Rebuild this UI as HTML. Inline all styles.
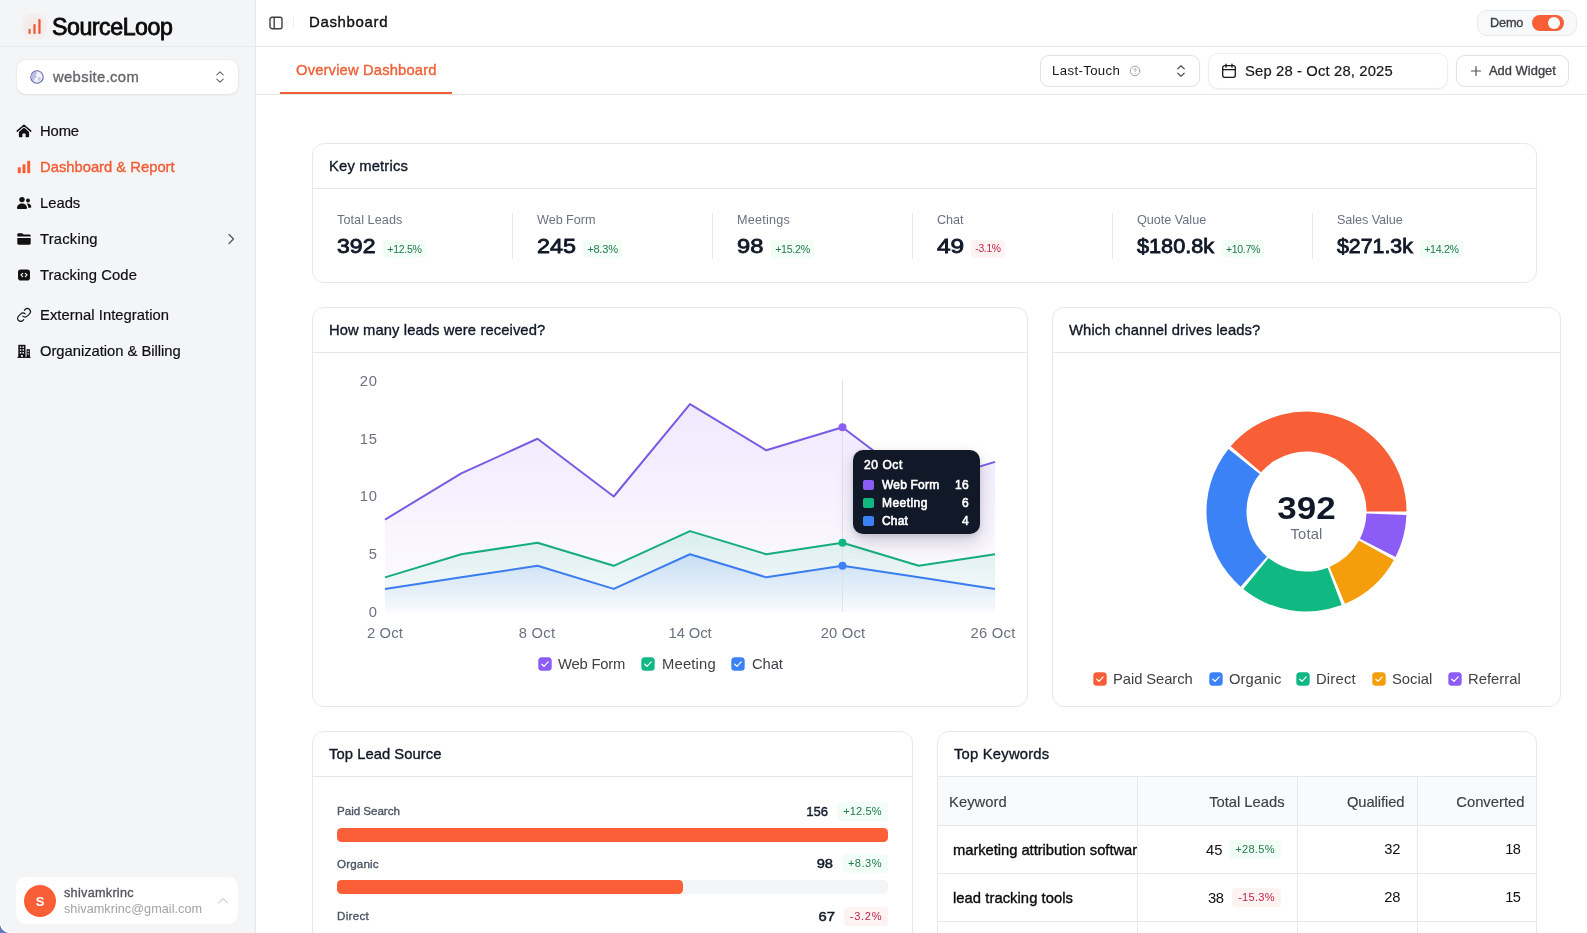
<!DOCTYPE html>
<html lang="en">
<head>
<meta charset="utf-8">
<title>SourceLoop Dashboard</title>
<style>
*{box-sizing:border-box;margin:0;padding:0}
html,body{width:1587px;height:933px;overflow:hidden;background:#fff}
body{font-family:"Liberation Sans",Arial,sans-serif;color:#111827;position:relative;font-size:14px}
.abs{position:absolute}
.t{will-change:transform;position:absolute;white-space:nowrap;line-height:20px;margin-top:-10px;height:20px}
.r{text-align:right}
.m{-webkit-text-stroke:0.35px currentColor}
.sb{-webkit-text-stroke:0.6px currentColor}
.sb3{-webkit-text-stroke:.45px currentColor}
.m2{-webkit-text-stroke:0.15px currentColor}
.b{font-weight:700}
.sb2{-webkit-text-stroke:.85px currentColor}
.card{position:absolute;border:1px solid #e7e8ea;border-radius:12px;background:#fff}
.hl{position:absolute;height:1px;background:#e7e8ea}
.vl{position:absolute;width:1px;background:#e7e8ea}
.g{color:#6b7280}
.badge{will-change:transform;position:absolute;height:18px;border-radius:4px;font-size:10.5px;line-height:18px;text-align:center;white-space:nowrap}
.up{background:#f3fdf7;color:#1f7a4d}
.dn{background:#fef3f3;color:#c0264a}
svg{position:absolute;overflow:visible}
/*FIT*/
#t-logo{font-size:23.21px!important;letter-spacing:-0.482px}
#t-site{font-size:14.77px!important;letter-spacing:0.369px}
#t-home{font-size:14.77px!important;letter-spacing:-0.111px}
#t-dash{font-size:14.77px!important;letter-spacing:0.001px}
#t-leads{font-size:14.77px!important;letter-spacing:0.006px}
#t-track{font-size:14.77px!important;letter-spacing:0.212px}
#t-tcode{font-size:14.77px!important;letter-spacing:0.114px}
#t-ext{font-size:14.77px!important;letter-spacing:0.052px}
#t-org{font-size:14.77px!important;letter-spacing:-0.026px}
#t-uname{font-size:12.66px!important;letter-spacing:0.280px}
#t-umail{font-size:12.66px!important;letter-spacing:0.038px}
#t-title{font-size:14.98px!important;letter-spacing:0.657px}
#t-tab{font-size:14.77px!important;letter-spacing:0.150px}
#t-demo{font-size:12.66px!important;letter-spacing:-0.145px}
#t-lt{font-size:13.19px!important;letter-spacing:0.373px}
#t-date{font-size:14.77px!important;letter-spacing:0.158px}
#t-add{font-size:12.87px!important;letter-spacing:0.041px}
#t-km{font-size:14.77px!important;letter-spacing:0.173px}
#t-k1l{font-size:12.66px!important;letter-spacing:0.057px}
#t-k1v{font-size:21.10px!important;letter-spacing:0.000px;transform:scaleX(1.093);transform-origin:left center}
#t-k2l{font-size:12.66px!important;letter-spacing:-0.047px}
#t-k2v{font-size:21.10px!important;letter-spacing:0.000px;transform:scaleX(1.105);transform-origin:left center}
#t-k3l{font-size:12.66px!important;letter-spacing:0.208px}
#t-k3v{font-size:21.10px!important;letter-spacing:0.000px;transform:scaleX(1.125);transform-origin:left center}
#t-k4l{font-size:12.66px!important;letter-spacing:-0.038px}
#t-k4v{font-size:21.10px!important;letter-spacing:0.000px;transform:scaleX(1.159);transform-origin:left center}
#t-k5l{font-size:12.66px!important;letter-spacing:-0.021px}
#t-k5v{font-size:21.10px!important;letter-spacing:0.000px;transform:scaleX(1.028);transform-origin:left center}
#t-k6l{font-size:12.66px!important;letter-spacing:-0.079px}
#t-k6v{font-size:21.10px!important;letter-spacing:0.000px;transform:scaleX(1.011);transform-origin:left center}
#b-k1{font-size:10.59px!important;letter-spacing:-0.315px}
#b-k2{font-size:11.08px!important;letter-spacing:-0.199px}
#b-k3{font-size:10.71px!important;letter-spacing:-0.315px}
#b-k4{font-size:10.37px!important;letter-spacing:-0.315px}
#b-k5{font-size:10.56px!important;letter-spacing:-0.315px}
#b-k6{font-size:10.68px!important;letter-spacing:-0.315px}
#t-lc{font-size:14.77px!important;letter-spacing:0.101px}
#t-dc{font-size:14.77px!important;letter-spacing:0.129px}
#t-y20{font-size:14.77px!important;letter-spacing:0.945px;margin-left:0.945px}
#t-x1{font-size:14.77px!important;letter-spacing:0.193px}
#t-x2{font-size:14.77px!important;letter-spacing:0.243px}
#t-x3{font-size:14.77px!important;letter-spacing:-0.088px}
#t-x4{font-size:14.77px!important;letter-spacing:0.172px}
#t-x5{font-size:14.77px!important;letter-spacing:0.252px}
#t-l1{font-size:14.77px!important;letter-spacing:-0.199px}
#t-l2{font-size:14.77px!important;letter-spacing:0.188px}
#t-l3{font-size:14.77px!important;letter-spacing:-0.108px}
#t-tt{font-size:12.00px!important;letter-spacing:0.576px}
#t-tt1{font-size:12.00px!important;letter-spacing:0.192px}
#t-tt2{font-size:12.00px!important;letter-spacing:0.456px}
#t-tt3{font-size:12.00px!important;letter-spacing:0.160px}
#t-tv1{font-size:12.00px!important;letter-spacing:0.281px;margin-left:0.281px}
#t-d1{font-size:14.77px!important;letter-spacing:-0.070px}
#t-d2{font-size:14.77px!important;letter-spacing:0.109px}
#t-d3{font-size:14.77px!important;letter-spacing:0.201px}
#t-d4{font-size:14.77px!important;letter-spacing:-0.012px}
#t-d5{font-size:14.77px!important;letter-spacing:0.035px}
#t-dtot{font-size:30.59px!important;letter-spacing:0.000px;transform:scaleX(1.143);transform-origin:center center}
#t-dlab{font-size:14.77px!important;letter-spacing:0.194px}
#t-sc{font-size:14.77px!important;letter-spacing:0.057px}
#t-s1{font-size:11.60px!important;letter-spacing:-0.026px}
#t-s2{font-size:11.60px!important;letter-spacing:0.170px}
#t-s3{font-size:11.60px!important;letter-spacing:0.291px}
#t-s1v{font-size:12.98px!important;letter-spacing:0.000px;transform:scaleX(0.995);transform-origin:right center}
#t-s2v{font-size:12.98px!important;letter-spacing:0.000px;transform:scaleX(1.133);transform-origin:right center}
#t-s3v{font-size:12.98px!important;letter-spacing:0.000px;transform:scaleX(1.147);transform-origin:right center}
#b-s1{font-size:11.08px!important;letter-spacing:0.131px}
#b-s2{font-size:11.08px!important;letter-spacing:0.501px}
#b-s3{font-size:11.08px!important;letter-spacing:0.697px}
#t-kc{font-size:14.77px!important;letter-spacing:0.219px}
#t-h1{font-size:14.77px!important;letter-spacing:0.053px}
#t-h2{font-size:14.77px!important;letter-spacing:-0.017px;margin-left:-0.017px}
#t-h3{font-size:14.77px!important;letter-spacing:-0.078px;margin-left:-0.078px}
#t-h4{font-size:14.77px!important;letter-spacing:0.017px;margin-left:0.017px}
#t-r2k{font-size:14.77px!important;letter-spacing:0.052px}
#t-r1a{font-size:14.77px!important;letter-spacing:0.145px}
#t-r1b{font-size:14.77px!important;letter-spacing:-0.355px;margin-left:-0.355px}
#t-r1c{font-size:14.56px!important;letter-spacing:-0.420px;margin-left:-0.420px}
#t-r2a{font-size:14.77px!important;letter-spacing:-0.355px}
#t-r2b{font-size:14.77px!important;letter-spacing:-0.355px;margin-left:-0.355px}
#t-r2c{font-size:14.56px!important;letter-spacing:-0.420px;margin-left:-0.420px}
#b-r1{font-size:11.08px!important;letter-spacing:0.311px}
#b-r2{font-size:11.08px!important;letter-spacing:0.265px}
#t-y15{font-size:14.77px!important;letter-spacing:0.945px;margin-left:0.945px}
#t-y10{font-size:14.77px!important;letter-spacing:0.945px;margin-left:0.945px}
#t-r1k{font-size:14.77px!important;letter-spacing:-0.048px}
#t-y5{font-size:14.77px!important;letter-spacing:0.945px;margin-left:0.945px}
#t-y0{font-size:14.77px!important;letter-spacing:0.945px;margin-left:0.945px}
#t-tv2{font-size:12.00px!important;letter-spacing:0.281px;margin-left:0.281px}
#t-tv3{font-size:12.00px!important;letter-spacing:0.281px;margin-left:0.281px}
/*ENDFIT*/
</style>
</head>
<body>

<!-- ============ SIDEBAR ============ -->
<div class="abs" id="sidebar" style="left:0;top:0;width:256px;height:933px;background:#f4f5f7;border-right:1px solid #e5e7eb"></div>
<div class="hl" style="left:0;top:46px;width:255px"></div>

<!-- logo -->
<svg style="left:22px;top:13px" width="25" height="27" viewBox="0 0 25 27">
  <defs><radialGradient id="lg" cx=".5" cy=".5" r=".62"><stop offset="0" stop-color="#ff6a3d" stop-opacity=".09"/><stop offset=".7" stop-color="#ff6a3d" stop-opacity=".05"/><stop offset="1" stop-color="#ff6a3d" stop-opacity="0"/></radialGradient></defs>
  <rect x="0" y="0" width="25" height="27" rx="6" fill="url(#lg)"/>
  <rect x="6.500" y="15.800" width="2.100" height="5.200" rx=".9" fill="#ea5a33"/>
  <rect x="11.400" y="11" width="2.200" height="10" rx=".9" fill="#ea5a33"/>
  <rect x="16.300" y="6" width="2.300" height="15" rx=".9" fill="#ea5a33"/>
</svg>
<div class="t" id="t-logo" style="-webkit-text-stroke:.8px #0a0a0a;left:52px;top:27px;font-size:22px;line-height:28px;margin-top:-14px;height:28px;color:#0a0a0a">SourceLoop</div>

<!-- site selector -->
<div class="abs" style="left:17px;top:60px;width:221px;height:34px;background:#fff;border-radius:9px;box-shadow:0 0 0 1px rgba(229,231,235,.35),0 1px 3px rgba(0,0,0,.09)"></div>
<svg style="left:30px;top:70px" width="14" height="14" viewBox="0 0 14 14">
  <circle cx="7" cy="7" r="6.200" fill="#f1f2fc" stroke="#6164ad" stroke-width="1.100"/>
  <path d="M2.300 3.600c1.300-1.500 3.400-1.900 4.300-1.300.9.600-.3 1.500-.8 2.300-.5.800.9 1.100.7 2.100-.2 1-1.600.8-2 1.800-.3.800.3 1.900-.5 2.300C2.500 10 1.200 8.300 1.200 7c0-1.300.4-2.500 1.100-3.400z" fill="#b9bce3"/>
  <path d="M8.500 7.300c.9-.5 2-.1 2.300.7.300.8-.3 1.800-1 2.600-.6.700-1.500.5-1.600-.4-.1-.9-.7-2.300.3-2.900z" fill="#c9cbea"/>
  <path d="M9.300 1.600c.3.800 1.300 1.100 2.100 1.600" fill="none" stroke="#b9bce3" stroke-width=".9"/>
</svg>
<div class="t m" id="t-site" style="left:53px;top:77px;font-size:14px;color:#65676c">website.com</div>
<svg style="left:214px;top:70px" width="12" height="14" viewBox="0 0 12 14" fill="none" stroke="#63636b" stroke-width="1.100" stroke-linecap="round" stroke-linejoin="round">
  <path d="M2.8 4.8 6 1.8l3.2 3M2.8 9.2 6 12.2l3.2-3"/>
</svg>

<!-- nav -->
<svg style="left:16px;top:123px" width="16" height="16" viewBox="0 0 16 16">
  <path d="M8 2.2 1.2 8.1M8 2.2l6.8 5.9" fill="none" stroke="#111" stroke-width="1.5" stroke-linecap="round"/>
  <path d="M8 4.6 2.9 9v4.3c0 .5.4.9.9.9h2.6v-3.3c0-.3.2-.5.5-.5h2.2c.3 0 .5.2.5.5v3.3h2.6c.5 0 .9-.4.9-.9V9z" fill="#111"/>
</svg>
<div class="t" id="t-home" style="left:40px;top:131px;font-size:14px;color:#0f0f10;-webkit-text-stroke:.2px #0f0f10">Home</div>

<svg style="left:16px;top:159px" width="16" height="16" viewBox="0 0 16 16" fill="#f95f37">
  <rect x="1.8" y="8.3" width="3" height="6" rx=".8"/><rect x="6.5" y="5.2" width="3" height="9.1" rx=".8"/><rect x="11.2" y="1.8" width="3" height="12.5" rx=".8"/>
</svg>
<div class="t m" id="t-dash" style="left:40px;top:167px;font-size:14px;color:#f05c33">Dashboard &amp; Report</div>

<svg style="left:16px;top:195px" width="16" height="16" viewBox="0 0 16 16" fill="#111">
  <circle cx="6" cy="4.6" r="2.7"/><path d="M1 13.2c0-2.8 2.2-4.6 5-4.6s5 1.8 5 4.6c0 .5-.4.8-.8.8H1.800c-.4 0-.8-.3-.8-.8z"/>
  <circle cx="12" cy="5.6" r="2"/><path d="M11.4 8.500c2.200-.2 3.900 1.300 3.900 3.500 0 .4-.3.700-.7.700h-2.400c.1-1.700-.4-3.100-1.600-4z"/>
</svg>
<div class="t" id="t-leads" style="left:40px;top:203px;font-size:14px;color:#0f0f10;-webkit-text-stroke:.2px #0f0f10">Leads</div>

<svg style="left:16px;top:231px" width="16" height="16" viewBox="0 0 16 16" fill="#111">
  <path d="M1.300 3.600c0-.8.600-1.400 1.400-1.400h3.100c.4 0 .8.200 1.100.5l.7.800h5.700c.8 0 1.400.6 1.400 1.400v.5H1.300z"/>
  <path d="M1.300 7h13.400v5.300c0 .8-.6 1.400-1.400 1.400H2.700c-.8 0-1.400-.6-1.400-1.400z"/>
</svg>
<div class="t" id="t-track" style="left:40px;top:239px;font-size:14px;color:#0f0f10;-webkit-text-stroke:.2px #0f0f10">Tracking</div>
<svg style="left:226px;top:233px" width="10" height="12" viewBox="0 0 10 12" fill="none" stroke="#52525b" stroke-width="1.2" stroke-linecap="round" stroke-linejoin="round"><path d="M3 1.500 7.500 6 3 10.500"/></svg>

<svg style="left:16px;top:267px" width="16" height="16" viewBox="0 0 16 16">
  <rect x="2" y="2.400" width="12" height="11.200" rx="2.800" fill="#111"/>
  <path d="M6.700 6.300 5 8l1.700 1.700M9.300 6.300 11 8 9.300 9.700" fill="none" stroke="#f4f5f7" stroke-width="1.200" stroke-linecap="round" stroke-linejoin="round"/>
</svg>
<div class="t" id="t-tcode" style="left:40px;top:275px;font-size:14px;color:#0f0f10;-webkit-text-stroke:.2px #0f0f10">Tracking Code</div>

<svg style="left:16px;top:307px" width="16" height="16" viewBox="0 0 16 16" fill="none" stroke="#111" stroke-width="1.100" stroke-linecap="round" stroke-linejoin="round">
  <path d="M6.800 9.200a3.100 3.100 0 0 0 4.400 0l2.300-2.300a3.100 3.100 0 0 0-4.400-4.400L8.300 3.300"/>
  <path d="M9.200 6.800a3.100 3.100 0 0 0-4.400 0L2.500 9.100a3.100 3.100 0 0 0 4.400 4.400l.8-.8"/>
</svg>
<div class="t" id="t-ext" style="left:40px;top:315px;font-size:14px;color:#0f0f10;-webkit-text-stroke:.2px #0f0f10">External Integration</div>

<svg style="left:16px;top:343px" width="16" height="16" viewBox="0 0 16 16">
  <path d="M2.300 1.800h7.200v12.600H2.300z" fill="#111"/><path d="M10.600 6.200h3.300v8.200h-3.300z" fill="#111"/>
  <g fill="#f4f5f7"><rect x="3.800" y="3.400" width="1.500" height="1.500"/><rect x="6.500" y="3.400" width="1.500" height="1.500"/><rect x="3.800" y="6.200" width="1.500" height="1.500"/><rect x="6.500" y="6.200" width="1.500" height="1.500"/><rect x="3.800" y="9" width="1.500" height="1.500"/><rect x="6.500" y="9" width="1.500" height="1.500"/><rect x="5" y="12" width="1.800" height="2.400"/><rect x="11.600" y="7.800" width="1.200" height="1.300"/><rect x="11.600" y="10.300" width="1.200" height="1.300"/></g>
  <rect x="1.400" y="13.900" width="13.200" height="1" fill="#111"/>
</svg>
<div class="t" id="t-org" style="left:40px;top:351px;font-size:14px;color:#0f0f10;-webkit-text-stroke:.2px #0f0f10">Organization &amp; Billing</div>

<!-- user card -->
<div class="abs" style="left:16px;top:877px;width:222px;height:47px;background:#fff;border-radius:9px"></div>
<div class="abs" style="left:24px;top:885px;width:32px;height:32px;border-radius:16px;background:#f95f37"></div>
<div class="t b" id="t-ava" style="left:24px;width:32px;text-align:center;top:901.700px;font-size:13px;color:#fff">S</div>
<div class="t m" id="t-uname" style="left:64px;top:893px;font-size:12px;color:#55565c">shivamkrinc</div>
<div class="t" id="t-umail" style="left:64px;top:909px;font-size:12px;color:#a2a3a8">shivamkrinc@gmail.com</div>
<svg style="left:217px;top:896px" width="12" height="10" viewBox="0 0 12 10" fill="none" stroke="#d1d5db" stroke-width="1.100" stroke-linecap="round" stroke-linejoin="round"><path d="M1.500 7 6 2.500 10.500 7"/></svg>
<div class="abs" style="left:0;top:923px;width:10px;height:10px;background:radial-gradient(circle at 10px 0,rgba(255,255,255,0) 8.500px,#fff 9.200px,#fff 9.600px,#6478c4 10.500px)"></div>

<!-- ============ MAIN TOP BARS ============ -->
<div class="hl" style="left:256px;top:46px;width:1331px"></div>
<div class="hl" style="left:256px;top:94px;width:1331px"></div>

<svg style="left:269px;top:16px" width="14" height="14" viewBox="0 0 14 14" fill="none" stroke="#3f3f46" stroke-width="1.400"><rect x="1" y="1.300" width="12" height="11.400" rx="2"/><path d="M5.200 1.300v11.400"/></svg>
<div class="vl" style="left:293px;top:16px;height:13px;background:#f1f1f3"></div>
<div class="t m" id="t-title" style="left:309px;top:22px;font-size:14.200px;color:#0f0f10">Dashboard</div>

<div class="t m" id="t-tab" style="left:296px;top:70px;font-size:14px;color:#ee6038">Overview Dashboard</div>
<div class="abs" style="left:280px;top:92px;width:172px;height:2px;background:#ec5f37"></div>

<!-- demo pill -->
<div class="abs" style="left:1477px;top:10px;width:100px;height:26px;border-radius:10px;border:1px solid #e9eaec;background:#f8f9fa"></div>
<div class="t m" id="t-demo" style="left:1490px;top:23px;font-size:12px;color:#3f3f46">Demo</div>
<div class="abs" style="left:1532px;top:15px;width:32px;height:16px;border-radius:8px;background:#f95f37"></div>
<div class="abs" style="left:1548px;top:17px;width:12px;height:12px;border-radius:6px;background:#fff"></div>

<!-- attribution select -->
<div class="abs" style="left:1040px;top:55px;width:160px;height:32px;border-radius:9px;border:1px solid #dfe1e4;background:#fff"></div>
<div class="t" id="t-lt" style="left:1052.400px;top:71px;font-size:12.500px;color:#18181b">Last-Touch</div>
<svg style="left:1129px;top:65px" width="12" height="12" viewBox="0 0 12 12" fill="none" stroke="#a1a1aa" stroke-width="1" stroke-linecap="round"><circle cx="6" cy="6" r="4.800"/><path d="M4.800 4.900c0-.7.500-1.200 1.200-1.200s1.200.5 1.200 1.100c0 .9-1.200 1-1.200 1.900M6 8.400v.1"/></svg>
<svg style="left:1175px;top:64px" width="12" height="14" viewBox="0 0 12 14" fill="none" stroke="#52525b" stroke-width="1.200" stroke-linecap="round" stroke-linejoin="round"><path d="M2.800 4.800 6 1.800l3.200 3M2.800 9.200 6 12.200l3.200-3"/></svg>

<!-- date range -->
<div class="abs" style="left:1208px;top:53px;width:240px;height:36px;border-radius:10px;border:1px solid #eceef0;background:#fff;box-shadow:0 1px 2px rgba(0,0,0,.06)"></div>
<svg style="left:1221px;top:63px" width="16" height="16" viewBox="0 0 16 16" fill="none" stroke="#18181b" stroke-width="1.300" stroke-linecap="round" stroke-linejoin="round"><rect x="1.700" y="2.700" width="12.600" height="11.600" rx="2"/><path d="M1.700 6.600h12.600M5 1.200v3M11 1.200v3"/></svg>
<div class="t" id="t-date" style="left:1245px;top:71px;font-size:14px;color:#18181b;-webkit-text-stroke:.2px #18181b">Sep 28 - Oct 28, 2025</div>

<!-- add widget -->
<div class="abs" style="left:1456px;top:55px;width:113px;height:32px;border-radius:9px;border:1px solid #dfe1e4;background:#fff"></div>
<svg style="left:1470px;top:65px" width="12" height="12" viewBox="0 0 12 12" fill="none" stroke="#52525b" stroke-width="1.200" stroke-linecap="round"><path d="M6 1.500v9M1.500 6h9"/></svg>
<div class="t m" id="t-add" style="left:1488.700px;top:71px;font-size:12.200px;color:#3f3f46">Add Widget</div>

<!-- ============ CARDS ============ -->
<div class="card" id="c-km" style="left:312px;top:143px;width:1225px;height:140px"></div>
<div class="hl" style="left:313px;top:188px;width:1223px"></div>
<div class="t m" id="t-km" style="left:329px;top:166px;font-size:14px;color:#111827">Key metrics</div>

<div class="t g" id="t-k1l" style="left:337px;top:220px;font-size:12px">Total Leads</div>
<div class="t sb2" id="t-k1v" style="left:337px;top:246px;font-size:20px;line-height:26px;margin-top:-13px;height:26px">392</div>
<div class="badge up" id="b-k1" style="left:383px;top:240px;width:43px">+12.5%</div>

<div class="vl" style="left:512px;top:213px;height:46px"></div>
<div class="t g" id="t-k2l" style="left:537px;top:220px;font-size:12px">Web Form</div>
<div class="t sb2" id="t-k2v" style="left:537px;top:246px;font-size:20px;line-height:26px;margin-top:-13px;height:26px">245</div>
<div class="badge up" id="b-k2" style="left:583px;top:240px;width:39px">+8.3%</div>

<div class="vl" style="left:712px;top:213px;height:46px"></div>
<div class="t g" id="t-k3l" style="left:737px;top:220px;font-size:12px">Meetings</div>
<div class="t sb2" id="t-k3v" style="left:737px;top:246px;font-size:20px;line-height:26px;margin-top:-13px;height:26px">98</div>
<div class="badge up" id="b-k3" style="left:771px;top:240px;width:43px">+15.2%</div>

<div class="vl" style="left:912px;top:213px;height:46px"></div>
<div class="t g" id="t-k4l" style="left:937px;top:220px;font-size:12px">Chat</div>
<div class="t sb2" id="t-k4v" style="left:937px;top:246px;font-size:20px;line-height:26px;margin-top:-13px;height:26px">49</div>
<div class="badge dn" id="b-k4" style="left:971px;top:240px;width:34px">-3.1%</div>

<div class="vl" style="left:1112px;top:213px;height:46px"></div>
<div class="t g" id="t-k5l" style="left:1137px;top:220px;font-size:12px">Quote Value</div>
<div class="t sb2" id="t-k5v" style="left:1137px;top:246px;font-size:20px;line-height:26px;margin-top:-13px;height:26px">$180.8k</div>
<div class="badge up" id="b-k5" style="left:1222px;top:240px;width:42px">+10.7%</div>

<div class="vl" style="left:1312px;top:213px;height:46px"></div>
<div class="t g" id="t-k6l" style="left:1337px;top:220px;font-size:12px">Sales Value</div>
<div class="t sb2" id="t-k6v" style="left:1337px;top:246px;font-size:20px;line-height:26px;margin-top:-13px;height:26px">$271.3k</div>
<div class="badge up" id="b-k6" style="left:1420px;top:240px;width:43px">+14.2%</div>

<div class="card" id="c-line" style="left:312px;top:307px;width:716px;height:400px"></div>
<div class="hl" style="left:313px;top:352px;width:714px"></div>
<div class="t m" id="t-lc" style="left:329px;top:330px;font-size:14px;color:#111827">How many leads were received?</div>

<div class="t g r" id="t-y20" style="left:340px;width:37px;top:381px;font-size:14px">20</div>
<div class="t g r" id="t-y15" style="left:340px;width:37px;top:439px;font-size:14px">15</div>
<div class="t g r" id="t-y10" style="left:340px;width:37px;top:496px;font-size:14px">10</div>
<div class="t g r" id="t-y5" style="left:340px;width:37px;top:554px;font-size:14px">5</div>
<div class="t g r" id="t-y0" style="left:340px;width:37px;top:612px;font-size:14px">0</div>

<svg style="left:0;top:0" width="1587" height="933" viewBox="0 0 1587 933">
  <defs>
    <linearGradient id="gp" x1="0" y1="404" x2="0" y2="612" gradientUnits="userSpaceOnUse"><stop offset="0" stop-color="#8b5cf6" stop-opacity=".135"/><stop offset="1" stop-color="#8b5cf6" stop-opacity=".015"/></linearGradient>
    <linearGradient id="gg" x1="0" y1="531" x2="0" y2="612" gradientUnits="userSpaceOnUse"><stop offset="0" stop-color="#10b981" stop-opacity=".13"/><stop offset="1" stop-color="#10b981" stop-opacity=".01"/></linearGradient>
    <linearGradient id="gb" x1="0" y1="554" x2="0" y2="612" gradientUnits="userSpaceOnUse"><stop offset="0" stop-color="#3b82f6" stop-opacity=".17"/><stop offset="1" stop-color="#3b82f6" stop-opacity=".01"/></linearGradient>
  </defs>
  <path d="M385.00 519.60 461.25 473.40 537.50 438.75 613.75 496.50 690.00 404.10 766.25 450.30 842.50 427.20 918.75 484.95 995.00 461.85V612.3H385z" fill="url(#gp)"/>
  <path d="M385.00 577.35 461.25 554.25 537.50 542.70 613.75 565.80 690.00 531.15 766.25 554.25 842.50 542.70 918.75 565.80 995.00 554.25V612.3H385z" fill="url(#gg)"/>
  <path d="M385.00 588.90 461.25 577.35 537.50 565.80 613.75 588.90 690.00 554.25 766.25 577.35 842.50 565.80 918.75 577.35 995.00 588.90V612.3H385z" fill="url(#gb)"/>
  <path d="M842.5 380V611.5" stroke="#dfe1e5" stroke-width="1" fill="none"/>
  <path d="M385.00 519.60 461.25 473.40 537.50 438.75 613.75 496.50 690.00 404.10 766.25 450.30 842.50 427.20 918.75 484.95 995.00 461.85" fill="none" stroke="#7a5ae4" stroke-width="2" stroke-linejoin="round"/>
  <path d="M385.00 577.35 461.25 554.25 537.50 542.70 613.75 565.80 690.00 531.15 766.25 554.25 842.50 542.70 918.75 565.80 995.00 554.25" fill="none" stroke="#16ad7c" stroke-width="2" stroke-linejoin="round"/>
  <path d="M385.00 588.90 461.25 577.35 537.50 565.80 613.75 588.90 690.00 554.25 766.25 577.35 842.50 565.80 918.75 577.35 995.00 588.90" fill="none" stroke="#3b7df0" stroke-width="2" stroke-linejoin="round"/>
  <circle cx="842.5" cy="427.20" r="4" fill="#8b5cf6"/>
  <circle cx="842.5" cy="542.70" r="4" fill="#10b981"/>
  <circle cx="842.5" cy="565.80" r="4" fill="#3b82f6"/>
</svg>

<div class="t g" id="t-x1" style="left:335px;width:100px;text-align:center;top:633px;font-size:14px">2 Oct</div>
<div class="t g" id="t-x2" style="left:487px;width:100px;text-align:center;top:633px;font-size:14px">8 Oct</div>
<div class="t g" id="t-x3" style="left:640px;width:100px;text-align:center;top:633px;font-size:14px">14 Oct</div>
<div class="t g" id="t-x4" style="left:793px;width:100px;text-align:center;top:633px;font-size:14px">20 Oct</div>
<div class="t g" id="t-x5" style="left:943px;width:100px;text-align:center;top:633px;font-size:14px">26 Oct</div>

<!-- tooltip -->
<div class="abs" style="left:852.700px;top:450px;width:127.300px;height:83.700px;border-radius:10px;background:#111827;box-shadow:0 8px 18px rgba(17,24,39,.18),0 2px 5px rgba(17,24,39,.12)"></div>
<div class="t sb" id="t-tt" style="left:864px;top:465px;font-size:12px;color:#fff">20 Oct</div>
<div class="abs" style="left:863.400px;top:479.7px;width:10.300px;height:10.300px;border-radius:2px;background:#8b5cf6"></div>
<div class="abs" style="left:863.400px;top:497.7px;width:10.300px;height:10.300px;border-radius:2px;background:#10b981"></div>
<div class="abs" style="left:863.400px;top:515.7px;width:10.300px;height:10.300px;border-radius:2px;background:#3b82f6"></div>
<div class="t sb" id="t-tt1" style="left:881.700px;top:485px;font-size:12px;color:#fff">Web Form</div>
<div class="t sb" id="t-tt2" style="left:881.700px;top:503px;font-size:12px;color:#fff">Meeting</div>
<div class="t sb" id="t-tt3" style="left:881.700px;top:521px;font-size:12px;color:#fff">Chat</div>
<div class="t sb r" id="t-tv1" style="left:940px;width:29px;top:485px;font-size:12px;color:#fff">16</div>
<div class="t sb r" id="t-tv2" style="left:940px;width:29px;top:503px;font-size:12px;color:#fff">6</div>
<div class="t sb r" id="t-tv3" style="left:940px;width:29px;top:521px;font-size:12px;color:#fff">4</div>

<!-- legend -->
<svg style="left:538px;top:657px" width="14" height="14" viewBox="0 0 14 14"><rect x=".300" y=".300" width="13.400" height="13.400" rx="3.500" fill="#8b5cf6"/><path d="M3.800 7.200 6 9.300 10.200 4.900" fill="none" stroke="#fff" stroke-width="1.200" stroke-linecap="round" stroke-linejoin="round"/></svg>
<div class="t" id="t-l1" style="left:558px;top:664px;font-size:14px;color:#3f4147">Web Form</div>
<svg style="left:641px;top:657px" width="14" height="14" viewBox="0 0 14 14"><rect x=".300" y=".300" width="13.400" height="13.400" rx="3.500" fill="#10b981"/><path d="M3.800 7.200 6 9.300 10.200 4.900" fill="none" stroke="#fff" stroke-width="1.200" stroke-linecap="round" stroke-linejoin="round"/></svg>
<div class="t" id="t-l2" style="left:662px;top:664px;font-size:14px;color:#3f4147">Meeting</div>
<svg style="left:731px;top:657px" width="14" height="14" viewBox="0 0 14 14"><rect x=".300" y=".300" width="13.400" height="13.400" rx="3.500" fill="#3b82f6"/><path d="M3.800 7.200 6 9.300 10.200 4.900" fill="none" stroke="#fff" stroke-width="1.200" stroke-linecap="round" stroke-linejoin="round"/></svg>
<div class="t" id="t-l3" style="left:752px;top:664px;font-size:14px;color:#3f4147">Chat</div>

<div class="card" id="c-donut" style="left:1052px;top:307px;width:509px;height:400px"></div>
<div class="hl" style="left:1053px;top:352px;width:507px"></div>
<div class="t m" id="t-dc" style="left:1069px;top:330px;font-size:14px;color:#111827">Which channel drives leads?</div>
<!--DONUT-->
<svg style="left:0;top:0" width="1587" height="933" viewBox="0 0 1587 933">
  <path d="M1406.50 511.50A100 100 0 0 0 1230.70 446.27L1261.02 472.36A60 60 0 0 1 1366.50 511.50z" fill="#f95f37"/>
  <path d="M1228.47 448.96A100 100 0 0 0 1240.61 586.73L1266.97 556.64A60 60 0 0 1 1259.68 473.97z" fill="#3b82f6"/>
  <path d="M1243.28 588.98A100 100 0 0 0 1341.70 605.10L1327.62 567.66A60 60 0 0 1 1268.57 557.99z" fill="#10b981"/>
  <path d="M1344.94 603.82A100 100 0 0 0 1393.96 559.98L1358.98 540.59A60 60 0 0 1 1329.56 566.89z" fill="#f59e0b"/>
  <path d="M1395.60 556.90A100 100 0 0 0 1406.44 514.99L1366.46 513.59A60 60 0 0 1 1359.96 538.74z" fill="#8b5cf6"/>
</svg>
<!--/DONUT-->
<div class="t b" id="t-dtot" style="left:1256px;width:101px;text-align:center;top:508px;font-size:29px;line-height:34px;margin-top:-17px;height:34px;color:#111827">392</div>
<div class="t g" id="t-dlab" style="left:1256px;width:101px;text-align:center;top:534px;font-size:14px">Total</div>
<svg style="left:1093px;top:672px" width="14" height="14" viewBox="0 0 14 14"><rect x=".3" y=".3" width="13.4" height="13.4" rx="3.500" fill="#f95f37"/><path d="M3.8 7.2 6 9.3 10.200 4.900" fill="none" stroke="#fff" stroke-width="1.200" stroke-linecap="round" stroke-linejoin="round"/></svg>
<div class="t" id="t-d1" style="left:1113px;top:679px;font-size:14px;color:#3f4147">Paid Search</div>
<svg style="left:1209px;top:672px" width="14" height="14" viewBox="0 0 14 14"><rect x=".3" y=".3" width="13.4" height="13.4" rx="3.500" fill="#3b82f6"/><path d="M3.8 7.2 6 9.3 10.200 4.900" fill="none" stroke="#fff" stroke-width="1.200" stroke-linecap="round" stroke-linejoin="round"/></svg>
<div class="t" id="t-d2" style="left:1229px;top:679px;font-size:14px;color:#3f4147">Organic</div>
<svg style="left:1296px;top:672px" width="14" height="14" viewBox="0 0 14 14"><rect x=".3" y=".3" width="13.4" height="13.4" rx="3.500" fill="#10b981"/><path d="M3.8 7.2 6 9.3 10.200 4.900" fill="none" stroke="#fff" stroke-width="1.200" stroke-linecap="round" stroke-linejoin="round"/></svg>
<div class="t" id="t-d3" style="left:1316px;top:679px;font-size:14px;color:#3f4147">Direct</div>
<svg style="left:1372px;top:672px" width="14" height="14" viewBox="0 0 14 14"><rect x=".3" y=".3" width="13.4" height="13.4" rx="3.500" fill="#f59e0b"/><path d="M3.8 7.2 6 9.3 10.200 4.900" fill="none" stroke="#fff" stroke-width="1.200" stroke-linecap="round" stroke-linejoin="round"/></svg>
<div class="t" id="t-d4" style="left:1392px;top:679px;font-size:14px;color:#3f4147">Social</div>
<svg style="left:1448px;top:672px" width="14" height="14" viewBox="0 0 14 14"><rect x=".3" y=".3" width="13.4" height="13.4" rx="3.500" fill="#8b5cf6"/><path d="M3.8 7.2 6 9.3 10.200 4.900" fill="none" stroke="#fff" stroke-width="1.200" stroke-linecap="round" stroke-linejoin="round"/></svg>
<div class="t" id="t-d5" style="left:1468px;top:679px;font-size:14px;color:#3f4147">Referral</div>

<div class="card" id="c-src" style="left:312px;top:731px;width:601px;height:240px"></div>
<div class="hl" style="left:313px;top:776px;width:599px"></div>
<div class="t m" id="t-sc" style="left:329px;top:754px;font-size:14px;color:#111827">Top Lead Source</div>

<div class="t m" id="t-s1" style="left:337px;top:811px;font-size:11px;color:#4b5563">Paid Search</div>
<div class="t sb3" id="t-s1v" style="left:780px;width:48px;text-align:right;top:811.600px;font-size:12.300px;color:#111827">156</div>
<div class="badge up" id="b-s1" style="left:837px;top:802px;width:51px;height:19px;line-height:19px">+12.5%</div>
<div class="abs" style="left:337px;top:828px;width:551px;height:14px;border-radius:4.500px;background:#f4f5f7"></div>
<div class="abs" style="left:337px;top:828px;width:551px;height:14px;border-radius:4.500px;background:#fa5f38"></div>

<div class="t m" id="t-s2" style="left:337px;top:864px;font-size:11px;color:#4b5563">Organic</div>
<div class="t sb3" id="t-s2v" style="left:780px;width:53px;text-align:right;top:863.800px;font-size:12.300px;color:#111827">98</div>
<div class="badge up" id="b-s2" style="left:842px;top:854px;width:46px;height:19px;line-height:19px">+8.3%</div>
<div class="abs" style="left:337px;top:880px;width:551px;height:14px;border-radius:4.500px;background:#f4f5f7"></div>
<div class="abs" style="left:337px;top:880px;width:346px;height:14px;border-radius:4.500px;background:#fa5f38"></div>

<div class="t m" id="t-s3" style="left:337px;top:916px;font-size:11px;color:#4b5563">Direct</div>
<div class="t sb3" id="t-s3v" style="left:780px;width:55px;text-align:right;top:916.500px;font-size:12.300px;color:#111827">67</div>
<div class="badge dn" id="b-s3" style="left:844px;top:907px;width:44px;height:19px;line-height:19px">-3.2%</div>

<div class="card" id="c-kw" style="left:937px;top:731px;width:600px;height:240px"></div>
<div class="hl" style="left:938px;top:776px;width:598px"></div>
<div class="t m" id="t-kc" style="left:954px;top:754px;font-size:14px;color:#111827">Top Keywords</div>

<div class="abs" style="left:938px;top:777px;width:598px;height:48px;background:#f9fafb"></div>
<div class="hl" style="left:938px;top:825px;width:598px"></div>
<div class="hl" style="left:938px;top:873px;width:598px"></div>
<div class="hl" style="left:938px;top:921px;width:598px"></div>
<div class="vl" style="left:1137px;top:777px;height:156px"></div>
<div class="vl" style="left:1297px;top:777px;height:156px"></div>
<div class="vl" style="left:1417px;top:777px;height:156px"></div>

<div class="t m2" id="t-h1" style="left:949px;top:802px;font-size:14px;color:#3b4048">Keyword</div>
<div class="t m2 r" id="t-h2" style="left:1150px;width:134.500px;top:802px;font-size:14px;color:#3b4048">Total Leads</div>
<div class="t m2 r" id="t-h3" style="left:1300px;width:104.500px;top:802px;font-size:14px;color:#3b4048">Qualified</div>
<div class="t m2 r" id="t-h4" style="left:1420px;width:104.500px;top:802px;font-size:14px;color:#3b4048">Converted</div>

<div class="abs" style="left:938px;top:826px;width:199px;height:47px;overflow:hidden">
  <div class="t m" id="t-r1k" style="left:15.300px;top:24px;font-size:14px;color:#0a0a0a">marketing attribution software</div>
</div>
<div class="t" id="t-r1a" style="left:1206px;top:850px;font-size:14px;color:#0f0f11">45</div>
<div class="badge up" id="b-r1" style="left:1229px;top:840px;width:52px;height:19px;line-height:19px">+28.5%</div>
<div class="t r" id="t-r1b" style="left:1300px;width:100px;top:849px;font-size:14px;color:#0f0f11">32</div>
<div class="t r" id="t-r1c" style="left:1420px;width:100.500px;top:849px;font-size:14px;color:#0f0f11">18</div>

<div class="t m" id="t-r2k" style="left:953.300px;top:898px;font-size:14px;color:#0a0a0a">lead tracking tools</div>
<div class="t" id="t-r2a" style="left:1208px;top:898px;font-size:14px;color:#0f0f11">38</div>
<div class="badge dn" id="b-r2" style="left:1232px;top:888px;width:49px;height:19px;line-height:19px">-15.3%</div>
<div class="t r" id="t-r2b" style="left:1300px;width:100px;top:897px;font-size:14px;color:#0f0f11">28</div>
<div class="t r" id="t-r2c" style="left:1420px;width:100.500px;top:897px;font-size:14px;color:#0f0f11">15</div>

</body>
</html>
